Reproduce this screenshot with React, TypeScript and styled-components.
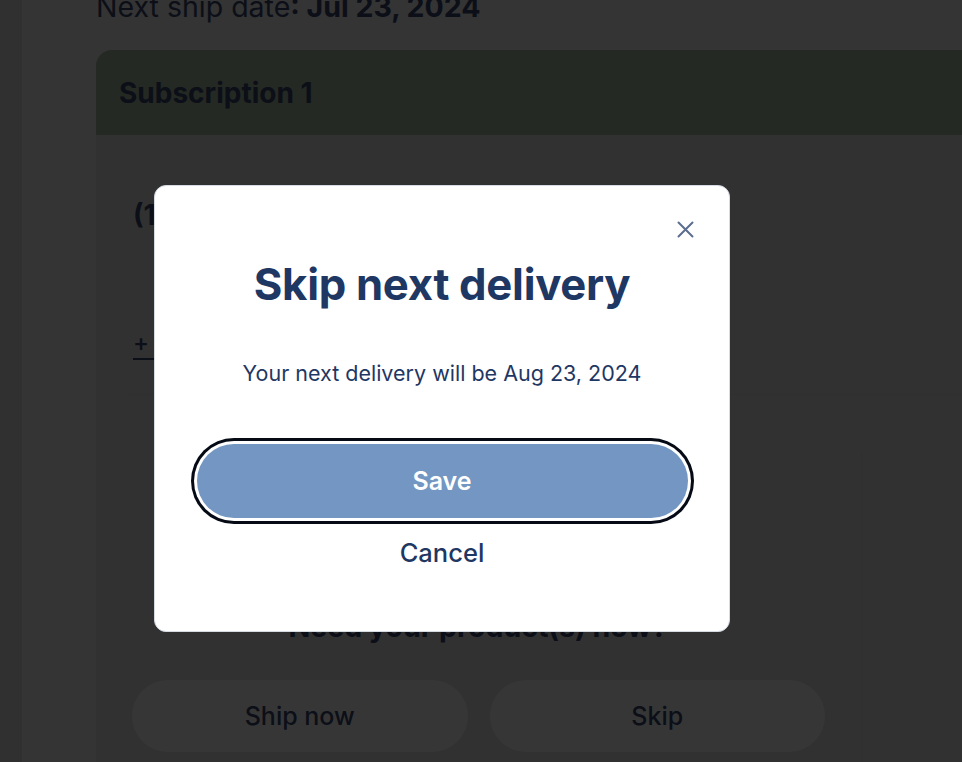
import React from "react";
import styled, { createGlobalStyle } from "styled-components";

const GlobalStyle = createGlobalStyle`
  html, body {
    margin: 0;
    padding: 0;
    height: 100%;
    overflow: hidden;
  }
  body {
    font-family: Inter, "Noto Sans", sans-serif;
    background: #f3f3f3;
    color: #3a4a6e;
  }
  * {
    box-sizing: border-box;
  }
`;

const Layout = styled.div`
  display: flex;
  height: 762px;
`;

const Sidebar = styled.div`
  width: 22px;
  flex-shrink: 0;
  background: #e0e0e2;
`;

const Main = styled.div`
  flex: 1;
  padding-left: 74px;
  display: flex;
  flex-direction: column;
`;

const ShipDate = styled.div`
  margin-top: -10px;
  font-size: 28.5px;
  line-height: 34px;
  font-weight: 400;
  white-space: nowrap;
  b {
    font-weight: 700;
  }
`;

const Card = styled.div`
  margin-top: 26px;
  width: 1000px;
  border-radius: 16px 0 0 0;
  background: #e6e6e6;
  overflow: hidden;
`;

const CardHeader = styled.div`
  height: 85px;
  display: flex;
  align-items: center;
  padding-left: 23px;
  background: #a8bfa3;
  font-size: 28px;
  font-weight: 700;
`;

const CardBody = styled.div`
  padding: 63px 0 0 35px;
  display: flex;
  flex-direction: column;
`;

const ItemTitle = styled.div`
  padding-left: 2px;
  font-size: 28px;
  line-height: 34px;
  font-weight: 700;
`;

const AddLink = styled.a`
  margin-top: 98px;
  padding-left: 2px;
  font-size: 24px;
  line-height: 30px;
  font-weight: 500;
  color: #3a4a6e;
  text-decoration: underline;
  text-underline-offset: 5px;
`;

const Divider = styled.hr`
  margin: 34px 0 0 -4px;
  border: none;
  border-top: 1px solid #dcdcdc;
`;

const Actions = styled.div`
  display: grid;
  grid-template-columns: 694px 1px 1fr;
  column-gap: 36px;
  padding-top: 58px;
`;

const ActionColumn = styled.div`
  display: flex;
  flex-direction: column;
  align-items: center;
  padding-top: 157px;
`;

const VerticalRule = styled.div`
  background: #dcdcdc;
  height: 320px;
`;

const ActionTitle = styled.div`
  font-size: 28.5px;
  line-height: 34px;
  font-weight: 700;
`;

const ButtonRow = styled.div`
  margin-top: 36px;
  display: grid;
  grid-template-columns: 1fr 1fr;
  gap: 22px;
  width: 100%;
  padding-left: 1px;
`;

const GhostButton = styled.button`
  height: 72px;
  border: none;
  border-radius: 36px;
  background: #ffffff;
  font-family: Inter, sans-serif;
  font-size: 25px;
  font-weight: 500;
  color: #3a4a6e;
`;

const Overlay = styled.div`
  position: fixed;
  inset: 0;
  background: rgba(0, 0, 0, 0.79);
`;

const Modal = styled.div`
  position: absolute;
  left: 154px;
  top: 185px;
  width: 576px;
  height: 447px;
  background: #ffffff;
  border: 1px solid #d5dae3;
  border-radius: 12px;
  padding: 73px 42px 0 42px;
  display: flex;
  flex-direction: column;
  align-items: center;
  color: #1f3763;
`;

const CloseButton = styled.button`
  all: unset;
  position: absolute;
  top: 35px;
  right: 35px;
  width: 17px;
  height: 17px;
  display: flex;
  cursor: pointer;
  svg {
    width: 17px;
    height: 17px;
  }
`;

const ModalTitle = styled.h2`
  margin: 0;
  font-size: 43.7px;
  line-height: 52px;
  font-weight: 700;
  letter-spacing: -0.3px;
`;

const ModalText = styled.p`
  margin: 48px 0 0;
  font-size: 21.5px;
  line-height: 28px;
  font-weight: 400;
`;

const SaveButton = styled.button`
  margin-top: 57px;
  width: 491px;
  height: 74px;
  border: none;
  border-radius: 37px;
  background: #7396c2;
  color: #ffffff;
  font-family: Inter, sans-serif;
  font-size: 25px;
  font-weight: 600;
  box-shadow: 0 0 0 3px #ffffff, 0 0 0 6px #050a14;
`;

const CancelButton = styled.button`
  all: unset;
  margin-top: 17px;
  font-family: Inter, sans-serif;
  font-size: 25.5px;
  line-height: 36px;
  font-weight: 500;
  color: #1f3763;
  cursor: pointer;
`;

export default function App() {
  return (
    <>
      <GlobalStyle />
      <Layout>
        <Sidebar />
        <Main>
          <ShipDate>
            Next ship date<b>: Jul 23, 2024</b>
          </ShipDate>
          <Card>
            <CardHeader>Subscription 1</CardHeader>
            <CardBody>
              <ItemTitle>(1) Dog Food Original</ItemTitle>
              <AddLink>+ Add product</AddLink>
              <Divider />
              <Actions>
                <ActionColumn>
                  <ActionTitle>Need your product(s) now?</ActionTitle>
                  <ButtonRow>
                    <GhostButton>Ship now</GhostButton>
                    <GhostButton>Skip</GhostButton>
                  </ButtonRow>
                </ActionColumn>
                <VerticalRule />
                <div />
              </Actions>
            </CardBody>
          </Card>
        </Main>
      </Layout>
      <Overlay>
        <Modal>
          <CloseButton aria-label="Close">
            <svg viewBox="0 0 17 17" fill="none" stroke="#5b6e8f" strokeWidth="2" strokeLinecap="round">
              <path d="M1.5 1.5 L15.5 15.5 M15.5 1.5 L1.5 15.5" />
            </svg>
          </CloseButton>
          <ModalTitle>Skip next delivery</ModalTitle>
          <ModalText>Your next delivery will be Aug 23, 2024</ModalText>
          <SaveButton>Save</SaveButton>
          <CancelButton>Cancel</CancelButton>
        </Modal>
      </Overlay>
    </>
  );
}
